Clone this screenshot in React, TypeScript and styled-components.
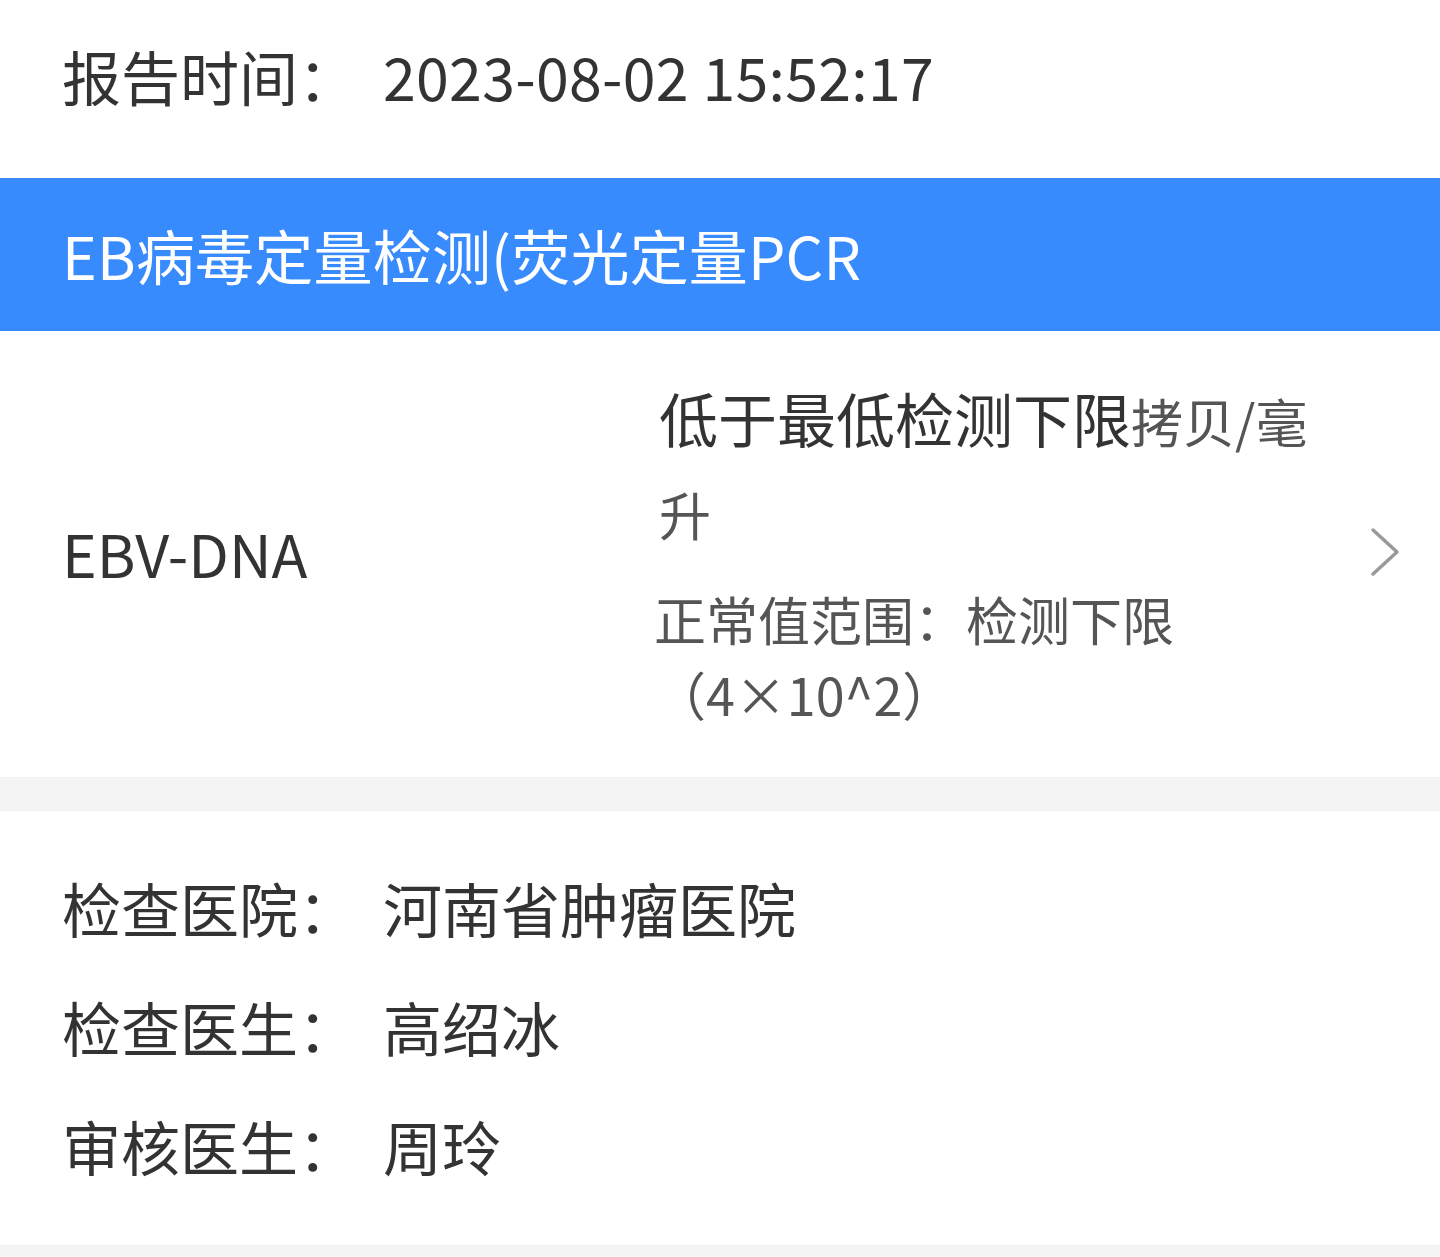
import React from "react";
import styled, { createGlobalStyle } from "styled-components";

const GlobalStyle = createGlobalStyle`
  html, body {
    margin: 0;
    padding: 0;
    background: #ffffff;
  }
  body {
    font-family: "Noto Sans CJK SC", "Noto Sans", sans-serif;
    color: #333333;
  }
`;

const Page = styled.div`
  width: 1440px;
  background: #f4f4f4;
`;

const TimeRow = styled.div`
  display: flex;
  height: 178px;
  box-sizing: border-box;
  padding: 32px 62px 0;
  background: #ffffff;
  font-size: 59px;
  line-height: 87px;
`;

const Label = styled.div`
  flex: 0 0 321px;
  color: #333333;
`;

const Value = styled.div<{ $spaced?: boolean }>`
  color: #333333;
  letter-spacing: ${(p) => (p.$spaced ? "0.3px" : "0")};
`;

const TitleBar = styled.div`
  display: flex;
  align-items: center;
  height: 153px;
  box-sizing: border-box;
  padding: 0 62px;
  background: #388bfd;
  color: #ffffff;
  font-size: 59px;
  letter-spacing: 0.2px;
`;

const ResultRow = styled.div`
  display: flex;
  align-items: center;
  min-height: 444px;
  box-sizing: border-box;
  padding: 42px 40px 46px 62px;
  background: #ffffff;
`;

const ItemName = styled.div`
  flex: 0 0 597px;
  font-size: 59px;
  color: #333333;
`;

const ResultCol = styled.div`
  flex: 0 0 680px;
  display: flex;
  flex-direction: column;
  gap: 22px;
`;

const ResultText = styled.div`
  font-size: 59px;
  line-height: 90px;
  color: #333333;
`;

const Unit = styled.span`
  font-size: 52px;
  color: #555555;
`;

const RangeText = styled.div`
  font-size: 52px;
  line-height: 75px;
  color: #555555;
  margin-left: -5px;
`;

const Arrow = styled.div`
  flex: 1;
  display: flex;
  justify-content: flex-end;
`;

const Gap = styled.div`
  height: 34px;
`;

const InfoSection = styled.div`
  background: #ffffff;
  padding: 37px 62px 40px;
`;

const InfoRow = styled.div`
  display: flex;
  font-size: 59px;
  line-height: 119px;
`;

const Tail = styled.div`
  height: 14px;
`;

const info = [
  { label: "检查医院：", value: "河南省肿瘤医院" },
  { label: "检查医生：", value: "高绍冰" },
  { label: "审核医生：", value: "周玲" },
];

const App: React.FC = () => {
  return (
    <Page>
      <GlobalStyle />
      <TimeRow>
        <Label>报告时间：</Label>
        <Value $spaced>2023-08-02 15:52:17</Value>
      </TimeRow>
      <TitleBar>EB病毒定量检测(荧光定量PCR</TitleBar>
      <ResultRow>
        <ItemName>EBV-DNA</ItemName>
        <ResultCol>
          <ResultText>
            低于最低检测下限<Unit>拷贝/毫升</Unit>
          </ResultText>
          <RangeText>正常值范围：检测下限（4×10^2）</RangeText>
        </ResultCol>
        <Arrow>
          <svg width="30" height="50" viewBox="0 0 30 50" fill="none">
            <path
              d="M3 3 L27 25 L3 47"
              stroke="#999999"
              strokeWidth="3.5"
              strokeLinecap="round"
              strokeLinejoin="round"
            />
          </svg>
        </Arrow>
      </ResultRow>
      <Gap />
      <InfoSection>
        {info.map((row) => (
          <InfoRow key={row.label}>
            <Label>{row.label}</Label>
            <Value>{row.value}</Value>
          </InfoRow>
        ))}
      </InfoSection>
      <Tail />
    </Page>
  );
};

export default App;
